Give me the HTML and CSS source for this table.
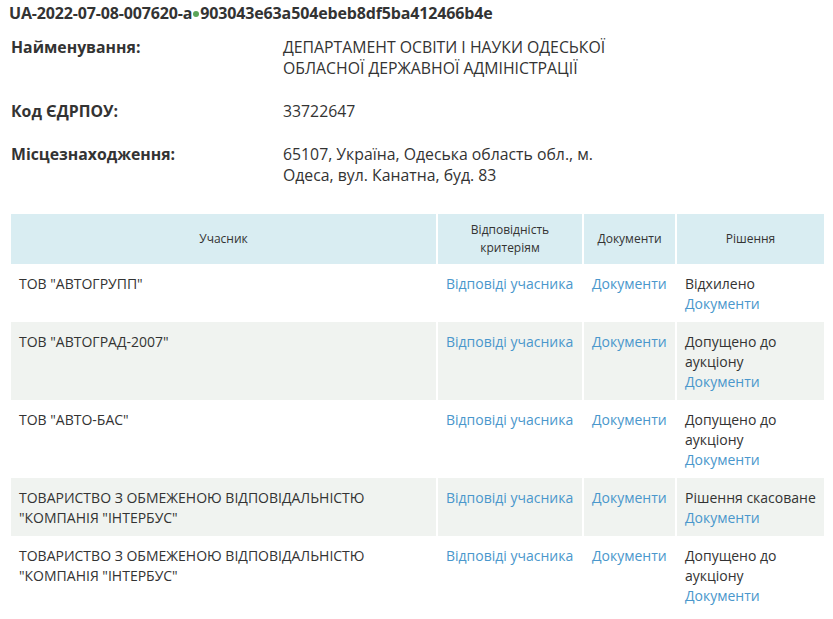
FILE: index.html
```html
<!DOCTYPE html>
<html lang="uk">
<head>
<meta charset="utf-8">
<link rel="stylesheet" href="styles.css">
</head>
<body>
<div class="page">
  <h1 class="title">UA-2022-07-08-007620-a<span class="dot"></span>903043e63a504ebeb8df5ba412466b4e</h1>
  <dl class="info">
    <div class="info-row">
      <dt>Найменування:</dt>
      <dd>ДЕПАРТАМЕНТ ОСВІТИ І НАУКИ ОДЕСЬКОЇ ОБЛАСНОЇ ДЕРЖАВНОЇ АДМІНІСТРАЦІЇ</dd>
    </div>
    <div class="info-row">
      <dt>Код ЄДРПОУ:</dt>
      <dd>33722647</dd>
    </div>
    <div class="info-row">
      <dt>Місцезнаходження:</dt>
      <dd>65107, Україна, Одеська область обл., м. Одеса, вул. Канатна, буд. 83</dd>
    </div>
  </dl>
  <table class="bids">
    <colgroup>
      <col class="c1"><col class="c2"><col class="c3"><col class="c4">
    </colgroup>
    <thead>
      <tr>
        <th>Учасник</th>
        <th>Відповідність<br>критеріям</th>
        <th>Документи</th>
        <th>Рішення</th>
      </tr>
    </thead>
    <tbody>
      <tr>
        <td>ТОВ "АВТОГРУПП"</td>
        <td><a href="#">Відповіді учасника</a></td>
        <td><a href="#">Документи</a></td>
        <td>Відхилено<br><a href="#">Документи</a></td>
      </tr>
      <tr class="alt">
        <td>ТОВ "АВТОГРАД-2007"</td>
        <td><a href="#">Відповіді учасника</a></td>
        <td><a href="#">Документи</a></td>
        <td>Допущено до аукціону<br><a href="#">Документи</a></td>
      </tr>
      <tr>
        <td>ТОВ "АВТО-БАС"</td>
        <td><a href="#">Відповіді учасника</a></td>
        <td><a href="#">Документи</a></td>
        <td>Допущено до аукціону<br><a href="#">Документи</a></td>
      </tr>
      <tr class="alt">
        <td>ТОВАРИСТВО З ОБМЕЖЕНОЮ ВІДПОВІДАЛЬНІСТЮ "КОМПАНІЯ "ІНТЕРБУС"</td>
        <td><a href="#">Відповіді учасника</a></td>
        <td><a href="#">Документи</a></td>
        <td>Рішення скасоване<br><a href="#">Документи</a></td>
      </tr>
      <tr>
        <td>ТОВАРИСТВО З ОБМЕЖЕНОЮ ВІДПОВІДАЛЬНІСТЮ "КОМПАНІЯ "ІНТЕРБУС"</td>
        <td><a href="#">Відповіді учасника</a></td>
        <td><a href="#">Документи</a></td>
        <td>Допущено до аукціону<br><a href="#">Документи</a></td>
      </tr>
    </tbody>
  </table>
</div>
</body>
</html>
```
FILE: styles.css
```css
html, body { margin: 0; padding: 0; background: #fff; }
body {
  font-family: "Open Sans", "Noto Sans", sans-serif;
  color: #333;
  font-size: 14px;
  line-height: 20px;
}
.page { padding: 3px 9px 0 9px; }
.title {
  margin: 0;
  font-size: 16px;
  line-height: 20px;
  font-weight: 700;
  color: #333;
  letter-spacing: -0.15px;
}
.dot {
  display: inline-block;
  width: 6px; height: 6px;
  border-radius: 50%;
  background: #5aa55a;
  margin: 0 1px 2px 1px;
  vertical-align: middle;
}
.info { margin: 14px 0 0 2px; }
.info-row { display: flex; margin-bottom: 22px; }
.info-row:last-child { margin-bottom: 28px; }
.info-row dt {
  width: 272px;
  flex: none;
  font-weight: 700;
  font-size: 15.8px;
  line-height: 21px;
}
.info-row dd {
  margin: 0;
  width: 335px;
  font-size: 15.8px;
  line-height: 21px;
}
.bids {
  margin: 0 0 0 2px;
  width: 813px;
  border-collapse: collapse;
  table-layout: fixed;
}
.c1 { width: 426px; }
.c2 { width: 146px; }
.c3 { width: 93px; }
.c4 { width: 148px; }
.bids th {
  background: #d9edf2;
  font-size: 12px;
  font-weight: 400;
  line-height: 18px;
  height: 50px;
  padding: 4px 6px;
  box-sizing: border-box;
  border-left: 2px solid #fff;
  vertical-align: middle;
}
.bids th:first-child, .bids td:first-child { border-left: none; }
.bids td {
  vertical-align: top;
  padding: 10px 8px 8px 8px;
  border-left: 2px solid #fff;
}
.bids tr.alt td { background: #f0f3f0; }
.bids a { color: #4a97cc; text-decoration: none; }
```
